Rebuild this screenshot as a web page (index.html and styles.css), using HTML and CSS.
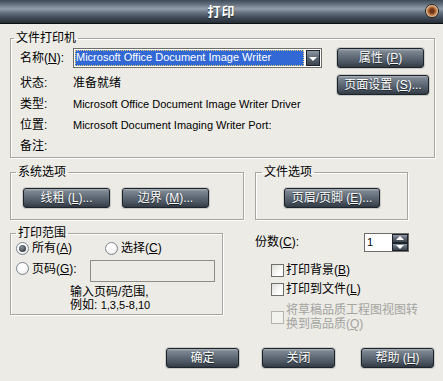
FILE: index.html
```html
<!DOCTYPE html>
<html lang="zh-CN">
<head>
  <meta charset="UTF-8">
  <title>打印</title>
  <link rel="stylesheet" href="styles.css">
</head>
<body>
  <div class="dialog">
    <div class="titlebar">
      <span class="title">打印</span>
      <span class="close-btn"></span>
    </div>

    <div class="dialog-body">
      <fieldset class="group printer-group">
        <legend>文件打印机</legend>
        <div class="printer-grid">
          <span class="label">名称(<u>N</u>):</span>
          <div class="select">
            <span class="select-value">Microsoft Office Document Image Writer</span>
            <span class="select-arrow"></span>
          </div>
          <button class="btn btn-props">属性 (<u>P</u>)</button>

          <span class="label row-status">状态:</span>
          <span class="value row-status">准备就绪</span>
          <button class="btn btn-setup">页面设置 (<u>S</u>)...</button>

          <span class="label">类型:</span>
          <span class="value latin">Microsoft Office Document Image Writer Driver</span>
          <span></span>

          <span class="label">位置:</span>
          <span class="value latin">Microsoft Document Imaging Writer Port:</span>
          <span></span>

          <span class="label">备注:</span>
          <span class="value"></span>
          <span></span>
        </div>
      </fieldset>

      <div class="options-row">
        <fieldset class="group system-group">
          <legend>系统选项</legend>
          <div class="btn-row">
            <button class="btn btn-wide">线粗 (<u>L</u>)...</button>
            <button class="btn btn-wide">边界 (<u>M</u>)...</button>
          </div>
        </fieldset>
        <fieldset class="group file-group">
          <legend>文件选项</legend>
          <button class="btn btn-header">页眉/页脚 (<u>E</u>)...</button>
        </fieldset>
      </div>

      <div class="bottom-row">
        <fieldset class="group range-group">
          <legend>打印范围</legend>
          <div class="range-line">
            <label class="option option-all"><span class="radio checked"></span><span>所有(<u>A</u>)</span></label>
            <label class="option option-sel"><span class="radio"></span><span>选择(<u>C</u>)</span></label>
          </div>
          <div class="range-line pages-line">
            <label class="option option-pages"><span class="radio"></span><span>页码(<u>G</u>):</span></label>
            <span class="pages-input"></span>
          </div>
          <div class="range-hint">
            <div>输入页码/范围,</div>
            <div>例如: <span class="latin">1,3,5-8,10</span></div>
          </div>
        </fieldset>

        <div class="copies-col">
          <div class="copies-line">
            <span class="copies-label">份数(<u>C</u>):</span>
            <div class="spinner">
              <span class="spinner-value latin">1</span>
              <span class="spinner-btns">
                <span class="spin spin-up"></span>
                <span class="spin spin-down"></span>
              </span>
            </div>
          </div>
          <label class="check-line first"><span class="checkbox"></span><span>打印背景(<u>B</u>)</span></label>
          <label class="check-line"><span class="checkbox"></span><span>打印到文件(<u>L</u>)</span></label>
          <label class="check-line disabled"><span class="checkbox"></span><span>将草稿品质工程图视图转<br>换到高品质(<u>Q</u>)</span></label>
        </div>
      </div>

      <div class="footer">
        <button class="btn btn-footer">确定</button>
        <button class="btn btn-footer">关闭</button>
        <button class="btn btn-footer btn-help">帮助 (<u>H</u>)</button>
      </div>
    </div>
  </div>
</body>
</html>
```

FILE: styles.css
```css
:root {
  --dialog-bg: #ecebe6;
  --group-line: #a7a6a2;
  --text: #000000;
  --text-disabled: #a3a3a0;
  --select-blue: #3168d6;
}

* {
  box-sizing: border-box;
}

body {
  margin: 0;
  background-color: var(--dialog-bg);
  font-family: "Liberation Sans", "Noto Sans CJK SC", sans-serif;
  font-size: 12px;
  line-height: 14px;
  color: var(--text);
  text-autospace: no-autospace;
}

.dialog {
  width: 443px;
  height: 381px;
  background-color: var(--dialog-bg);
}

u {
  text-decoration: underline;
  text-underline-offset: 1px;
}

.latin {
  font-family: "Liberation Sans", sans-serif;
  font-size: 11px;
}

/* title bar */
.titlebar {
  height: 24px;
  display: flex;
  align-items: center;
  justify-content: center;
  position: relative;
  border-bottom: 1px solid #0c0f12;
  background: linear-gradient(#3f4a58 0%, #66727f 20%, #929eab 38%, #66727f 55%, #434e5b 75%, #262d35 100%);
}

.title {
  color: #ffffff;
  font-weight: 700;
  font-size: 13px;
  letter-spacing: 1px;
  text-shadow: 0 1px 1px #1a1f25;
}

.close-btn {
  position: absolute;
  right: 4px;
  top: 4px;
  width: 14px;
  height: 14px;
  border-radius: 50%;
  border: 1px solid #2b2420;
  background: radial-gradient(circle at 50% 50%, #6a3418 0 22%, #a65c30 38%, #cf8e58 55%, #f1dcc4 72%, #b7a393 100%);
}

/* body */
.dialog-body {
  padding: 7px 9px 0 10px;
}

.group {
  margin: 0;
  min-width: 0;
  border: 1px solid var(--group-line);
  box-shadow: inset 1px 1px 0 #ffffff, 1px 1px 0 #ffffff;
}

.group legend {
  font-size: 12px;
  line-height: 14px;
  padding: 0 2px;
}

/* printer group */
.printer-group {
  width: 425px;
  padding: 3px 0 0 9px;
}

.printer-group legend {
  margin-left: -6px;
}

.printer-grid {
  display: grid;
  grid-template-columns: 53px 249px auto;
  grid-template-rows: 20px 25px 21px 21px 22px;
  align-items: center;
}

.printer-grid .row-status {
  align-self: end;
  line-height: 20px;
}

.value {
  white-space: nowrap;
}

.select {
  height: 20px;
  display: flex;
  align-items: stretch;
  background-color: #ffffff;
  border: 1px solid #6d6d6d;
  padding: 1px;
}

.select-value {
  flex: 1;
  background-color: var(--select-blue);
  color: #ffffff;
  font-family: "Liberation Sans", sans-serif;
  font-size: 11px;
  line-height: 14px;
  padding-left: 1px;
  outline: 1px dotted #f0d070;
  outline-offset: -1px;
  margin-right: 2px;
}

.select-arrow {
  width: 14px;
  border: 1px solid #1d2329;
  background: linear-gradient(#8e98a3, #5b6571 50%, #3c4550);
  display: flex;
  align-items: center;
  justify-content: center;
}

.select-arrow::after {
  content: "";
  border-left: 4px solid transparent;
  border-right: 4px solid transparent;
  border-top: 4px solid #ffffff;
  margin-top: 1px;
}

/* buttons */
.btn {
  height: 20px;
  padding: 0;
  border: 1px solid #1c232a;
  border-radius: 3px;
  background: linear-gradient(#aab2bb 0%, #7d8792 12%, #606b77 45%, #4a5460 75%, #323b44 100%);
  box-shadow: 0 0 0 1px #c9c9c6;
  color: #ffffff;
  font-family: "Liberation Sans", "Noto Sans CJK SC", sans-serif;
  font-size: 12px;
  line-height: 16px;
  text-shadow: 0 1px 1px #1b2127;
  white-space: nowrap;
}

.btn-props {
  width: 87px;
  justify-self: start;
  margin: -1px 0 0 15px;
}

.btn-setup {
  width: 92px;
  justify-self: start;
  align-self: end;
  margin: 0 0 -2px 15px;
}

/* option groups */
.options-row {
  display: flex;
  margin-top: 7px;
}

.system-group {
  width: 234px;
  padding: 9px 0 11px 12px;
}

.system-group legend {
  margin-left: -7px;
}

.btn-row {
  display: flex;
  gap: 12px;
}

.btn-wide {
  width: 87px;
}

.file-group {
  width: 153px;
  margin-left: 11px;
  padding: 9px 0 11px 28px;
}

.file-group legend {
  margin-left: -22px;
}

.btn-header {
  width: 96px;
}

/* range + copies */
.bottom-row {
  display: flex;
  align-items: flex-start;
  margin-top: 6px;
}

.range-group {
  width: 213px;
  padding: 0 0 2px 5px;
}

.range-line {
  display: flex;
  align-items: center;
  height: 16px;
}

.pages-line {
  height: 24px;
  margin-top: 3px;
}

.option {
  display: flex;
  align-items: center;
  gap: 3px;
  white-space: nowrap;
}

.option-all {
  width: 89px;
}

.option-pages {
  width: 74px;
  margin-top: -5px;
}

.radio {
  width: 13px;
  height: 13px;
  border-radius: 50%;
  border: 1px solid #7c8690;
  background: radial-gradient(circle at 40% 35%, #ffffff 0 40%, #d9d9d6 100%);
  display: flex;
  align-items: center;
  justify-content: center;
}

.radio.checked::after {
  content: "";
  width: 7px;
  height: 7px;
  border-radius: 50%;
  background: radial-gradient(circle at 40% 35%, #8a939c, #3b444d 70%);
}

.pages-input {
  width: 125px;
  height: 22px;
  border: 1px solid #8d8d8a;
}

.range-hint {
  padding: 3px 0 0 54px;
  line-height: 13px;
}

.copies-col {
  margin-left: 32px;
  padding-top: 7px;
  display: flex;
  flex-direction: column;
}

.copies-line {
  display: flex;
  align-items: center;
  height: 19px;
}

.copies-label {
  width: 109px;
  margin-top: -2px;
}

.spinner {
  width: 45px;
  height: 19px;
  display: flex;
  background-color: #ffffff;
  border: 1px solid #6d6d6d;
}

.spinner-value {
  flex: 1;
  padding-left: 2px;
  line-height: 17px;
}

.spinner-btns {
  width: 16px;
  display: flex;
  flex-direction: column;
}

.spin {
  flex: 1;
  border: 1px solid #1d2329;
  background: linear-gradient(#8e98a3, #5b6571 50%, #3c4550);
  display: flex;
  align-items: center;
  justify-content: center;
}

.spin-up::after {
  content: "";
  border-left: 4px solid transparent;
  border-right: 4px solid transparent;
  border-bottom: 4px solid #ffffff;
}

.spin-down::after {
  content: "";
  border-left: 4px solid transparent;
  border-right: 4px solid transparent;
  border-top: 4px solid #ffffff;
}

.check-line {
  display: flex;
  align-items: center;
  gap: 2px;
  padding-left: 16px;
  line-height: 16px;
  margin-top: 3px;
  white-space: nowrap;
}

.check-line.first {
  margin-top: 10px;
}

.check-line.disabled {
  margin-top: 6px;
  line-height: 14px;
  color: var(--text-disabled);
}

.checkbox {
  flex: none;
  width: 13px;
  height: 13px;
  border: 1px solid #6f6f6c;
  background: linear-gradient(135deg, #dcdcd8, #ffffff 70%);
}

.disabled .checkbox {
  border-color: #b3b3b0;
  background: #f2f2ef;
}

/* footer buttons */
.footer {
  display: flex;
  justify-content: flex-end;
  gap: 23px;
  margin-top: 17px;
}

.btn-footer {
  width: 73px;
}

.btn-help {
  margin-left: 3px;
}
```
